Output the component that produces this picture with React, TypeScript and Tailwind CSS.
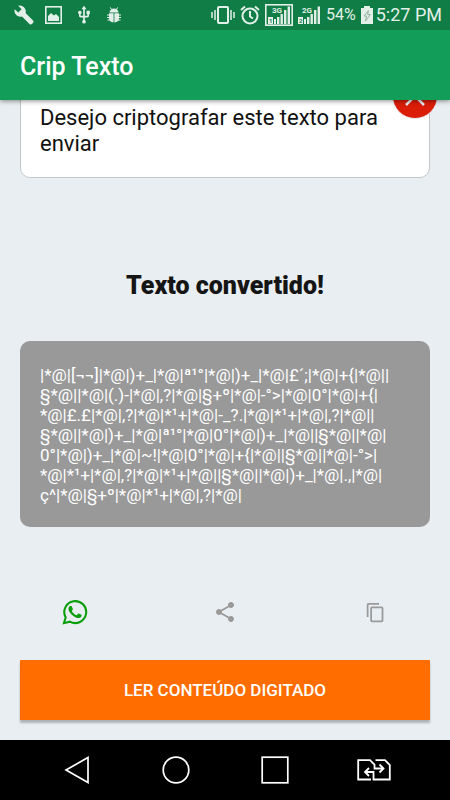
import { useState } from "react";
import { MdContentCopy, MdShare, MdUsb } from "react-icons/md";

const converted = [
  "|*@|[¬¬]|*@|)+_|*@|ª¹°|*@|)+_|*@|£´;|*@|+{|*@||",
  "§*@||*@|(.)-|*@|,?|*@|§+º|*@|-°>|*@|0°|*@|+{|",
  "*@|£.£|*@|,?|*@|*¹+|*@|-_?.|*@|*¹+|*@|,?|*@||",
  "§*@||*@|)+_|*@|ª¹°|*@|0°|*@|)+_|*@||§*@||*@|",
  "0°|*@|)+_|*@|~!|*@|0°|*@|+{|*@||§*@||*@|-°>|",
  "*@|*¹+|*@|,?|*@|*¹+|*@||§*@||*@|)+_|*@|.,|*@|",
  "ç^|*@|§+º|*@|*¹+|*@|,?|*@|",
];

function SignalIcon({ net, sim, boxed }: { net: string; sim: string; boxed?: boolean }) {
  return (
    <svg width={boxed ? 28 : 24} height="22" viewBox={boxed ? "0 0 28 22" : "2 0 24 22"} fill="#e3f0e9">
      {boxed && <rect x="0.8" y="0.8" width="26.4" height="20.4" fill="none" stroke="#e3f0e9" strokeWidth="1.6" />}
      <text x="7" y="9" fontSize="8" fontWeight="700" fontFamily="Roboto, sans-serif">{net}</text>
      <rect x="3" y="13" width="5" height="7" />
      <text x="4" y="19" fontSize="6" fontWeight="700" fill="#0f7d45" fontFamily="Roboto, sans-serif">{sim}</text>
      <rect x="9" y="15" width="2" height="5" />
      <rect x="12" y="13" width="2.4" height="7" />
      <rect x="15.5" y="10" width="2.4" height="10" />
      <rect x="19" y="6" width="2.4" height="14" />
      <rect x="22.6" y="2.5" width="2.4" height="17.5" />
    </svg>
  );
}

function StatusBar() {
  return (
    <div className="flex h-[30px] items-center justify-between bg-[#0f7d45] pr-2 pl-[14px] text-[#e3f0e9]">
      <div className="flex items-center">
        <svg width="20" height="20" viewBox="0 0 20 20" fill="currentColor">
          <path d="M4.2.7A6 6 0 0 1 11.6 8L19.3 15.700Q20 17 18.5 18.500 17 20 15.7 19.300L8 11.600A6 6 0 0 1 .7 4.200L4.300 7.600 7.600 4.300z" />
        </svg>
        <svg className="ml-[11px]" width="17" height="18" viewBox="0 0 17 18">
          <rect x="0.8" y="0.8" width="15.4" height="16.4" fill="none" stroke="currentColor" strokeWidth="1.6" />
          <path d="M3 15V10l3-3 3 2.5 2-1.5 3 3v4z" fill="currentColor" />
        </svg>
        <MdUsb className="ml-3 size-5" />
        <svg className="ml-[13px]" width="14" height="16" viewBox="0 0 14 16" fill="currentColor">
          <path d="M2.500 5.500a4.500 4 0 0 1 9 0z" />
          <path d="M2 6.300h4.600v9.300Q2 15 2 11zM7.400 6.300H12V11Q12 15 7.400 15.600z" />
          <path d="M4.500 2.500 3.300.4M9.500 2.500 10.700.4M3 8H0M11 8h3M3 10.500H0M11 10.500h3M3 13H.5M11 13h2.500" stroke="currentColor" strokeWidth="1" />
        </svg>
      </div>
      <div className="flex items-center">
        <svg width="24" height="18" viewBox="0 0 24 18" fill="none" stroke="currentColor">
          <rect x="7" y="1" width="10" height="16" rx="1" strokeWidth="2" />
          <path d="M1 6v6M4 4v10M20 4v10M23 6v6" strokeWidth="1.5" />
        </svg>
        <svg className="ml-[5px]" width="20" height="20" viewBox="0 0 20 20" fill="none" stroke="currentColor" strokeWidth="2">
          <circle cx="10" cy="11" r="7.5" />
          <path d="M10 6v5.500l3 2M1 5l4-3.500M19 5l-4-3.500" />
        </svg>
        <div className="ml-[5px] flex items-center gap-1">
          <SignalIcon net="3G" sim="1" boxed />
          <SignalIcon net="2G" sim="2" />
        </div>
        <span className="ml-[5px] text-[16px] leading-5">54%</span>
        <svg className="ml-[5px]" width="12" height="18" viewBox="0 0 12 18" fill="currentColor">
          <path d="M3 0h6v2h3v16H0V2h3z" />
          <path d="M7.500 4.500 3 10h2.500l-1 5L9.300 8.500H6.500z" fill="none" stroke="#8cab9a" strokeWidth="0.9" />
        </svg>
        <span className="ml-[3px] text-[18px] leading-5">5:27 PM</span>
      </div>
    </div>
  );
}

function NavBar() {
  return (
    <nav className="flex h-[60px] items-center bg-black px-[27px] text-white">
      <button aria-label="Voltar" className="flex flex-1 justify-center">
        <svg width="26" height="28" viewBox="0 0 26 28" fill="none" stroke="currentColor" strokeWidth="1.7">
          <path d="M24 1.500v25L2 14z" />
        </svg>
      </button>
      <button aria-label="Início" className="flex flex-1 justify-center">
        <svg width="28" height="28" viewBox="0 0 28 28" fill="none" stroke="currentColor" strokeWidth="1.7">
          <circle cx="14" cy="14" r="12.8" />
        </svg>
      </button>
      <button aria-label="Recentes" className="flex flex-1 justify-center">
        <svg width="28" height="28" viewBox="0 0 28 28" fill="none" stroke="currentColor" strokeWidth="1.7">
          <rect x="1.2" y="1.2" width="25.6" height="25.6" />
        </svg>
      </button>
      <button aria-label="Trocar SIM" className="flex flex-1 justify-center">
        <svg width="34" height="22" viewBox="0 0 34 22" fill="none" stroke="currentColor" strokeWidth="1.8">
          <path d="M14 20.500H1.200V1.200H13l4.500 4.500v3.800H26M18.500 1.200H28l4.800 4.800v14.500H16.500v-7.500H9" />
          <path d="m22.500 5.500 4 4-4 4M12 9l-4 4 4 4" />
        </svg>
      </button>
    </nav>
  );
}

export default function App() {
  const [text, setText] = useState("Desejo criptografar este texto para enviar");

  return (
    <div className="flex min-h-screen flex-col bg-[#e9eef2] font-[Roboto,sans-serif]">
      <header className="relative z-10 shadow-[0_1px_5px_rgba(0,0,0,0.45)]">
        <StatusBar />
        <div className="flex h-[70px] items-center bg-[#129e59] px-5 pt-1">
          <h1 className="text-[25px] leading-8 font-medium text-white">Crip Texto</h1>
        </div>
      </header>

      <main className="flex flex-1 flex-col overflow-hidden px-5 pb-5">
        <div className="relative -mt-4 rounded-[10px] border border-[#c4c7ca] bg-white px-[19px] py-5">
          <textarea
            aria-label="Texto para criptografar"
            rows={2}
            value={text}
            onChange={(e) => setText(e.target.value)}
            className="block w-full resize-none overflow-hidden text-[22px] leading-[26px] text-[#111] outline-none"
          />
          <button
            aria-label="Limpar"
            onClick={() => setText("")}
            className="absolute -top-3 -right-[9px] flex size-[46px] items-center justify-center rounded-full border border-[#e9eef2] bg-[#db1c06]"
          >
            <svg width="20" height="20" viewBox="0 0 20 20" stroke="#e9eef2" strokeWidth="2.5">
              <path d="m1 1 18 18M19 1 1 19" />
            </svg>
          </button>
        </div>

        <h2 className="mt-[92px] text-center text-[25px] leading-8 font-black text-[#151515]">Texto convertido!</h2>

        <output className="mt-[39px] block rounded-[10px] bg-[#999] px-5 pt-6 pb-[22px] text-[17px] leading-5 whitespace-pre text-white">
          {converted.join("\n")}
        </output>

        <div className="mt-auto -mx-5 flex items-center">
          <button aria-label="WhatsApp" className="flex flex-1 justify-center">
            <svg width="26" height="26" viewBox="0 0 24 24" fill="#0a9e0a">
              <path d="M17.472 14.382c-.297-.149-1.758-.867-2.030-.967-.273-.099-.471-.148-.670.150-.197.297-.767.966-.940 1.164-.173.199-.347.223-.644.075-.297-.150-1.255-.463-2.390-1.475-.883-.788-1.480-1.761-1.653-2.059-.173-.297-.018-.458.130-.606.134-.133.298-.347.446-.520.149-.174.198-.298.298-.497.099-.198.050-.371-.025-.520-.075-.149-.669-1.612-.916-2.207-.242-.579-.487-.500-.669-.510-.173-.008-.371-.010-.570-.010-.198 0-.520.074-.792.372-.272.297-1.040 1.016-1.040 2.479 0 1.462 1.065 2.875 1.213 3.074.149.198 2.096 3.200 5.077 4.487.709.306 1.262.489 1.694.625.712.227 1.360.195 1.871.118.571-.085 1.758-.719 2.006-1.413.248-.694.248-1.289.173-1.413-.074-.124-.272-.198-.570-.347z" />
              <path d="M1.800 22.300 3.400 17A10.100 10.100 0 1 1 7.300 20.900z" fill="none" stroke="#0a9e0a" strokeWidth="1.9" />
            </svg>
          </button>
          <button aria-label="Compartilhar" className="flex flex-1 justify-center text-[#999]">
            <MdShare className="size-6" />
          </button>
          <button aria-label="Copiar" className="flex flex-1 justify-center text-[#999]">
            <MdContentCopy className="size-[21px]" />
          </button>
        </div>

        <button className="mt-[35px] h-[60px] bg-[#ff6d00] pt-px text-[17px] font-medium text-white shadow-[0_3px_2px_rgba(0,0,0,0.25)]">
          LER CONTEÚDO DIGITADO
        </button>
      </main>

      <NavBar />
    </div>
  );
}
